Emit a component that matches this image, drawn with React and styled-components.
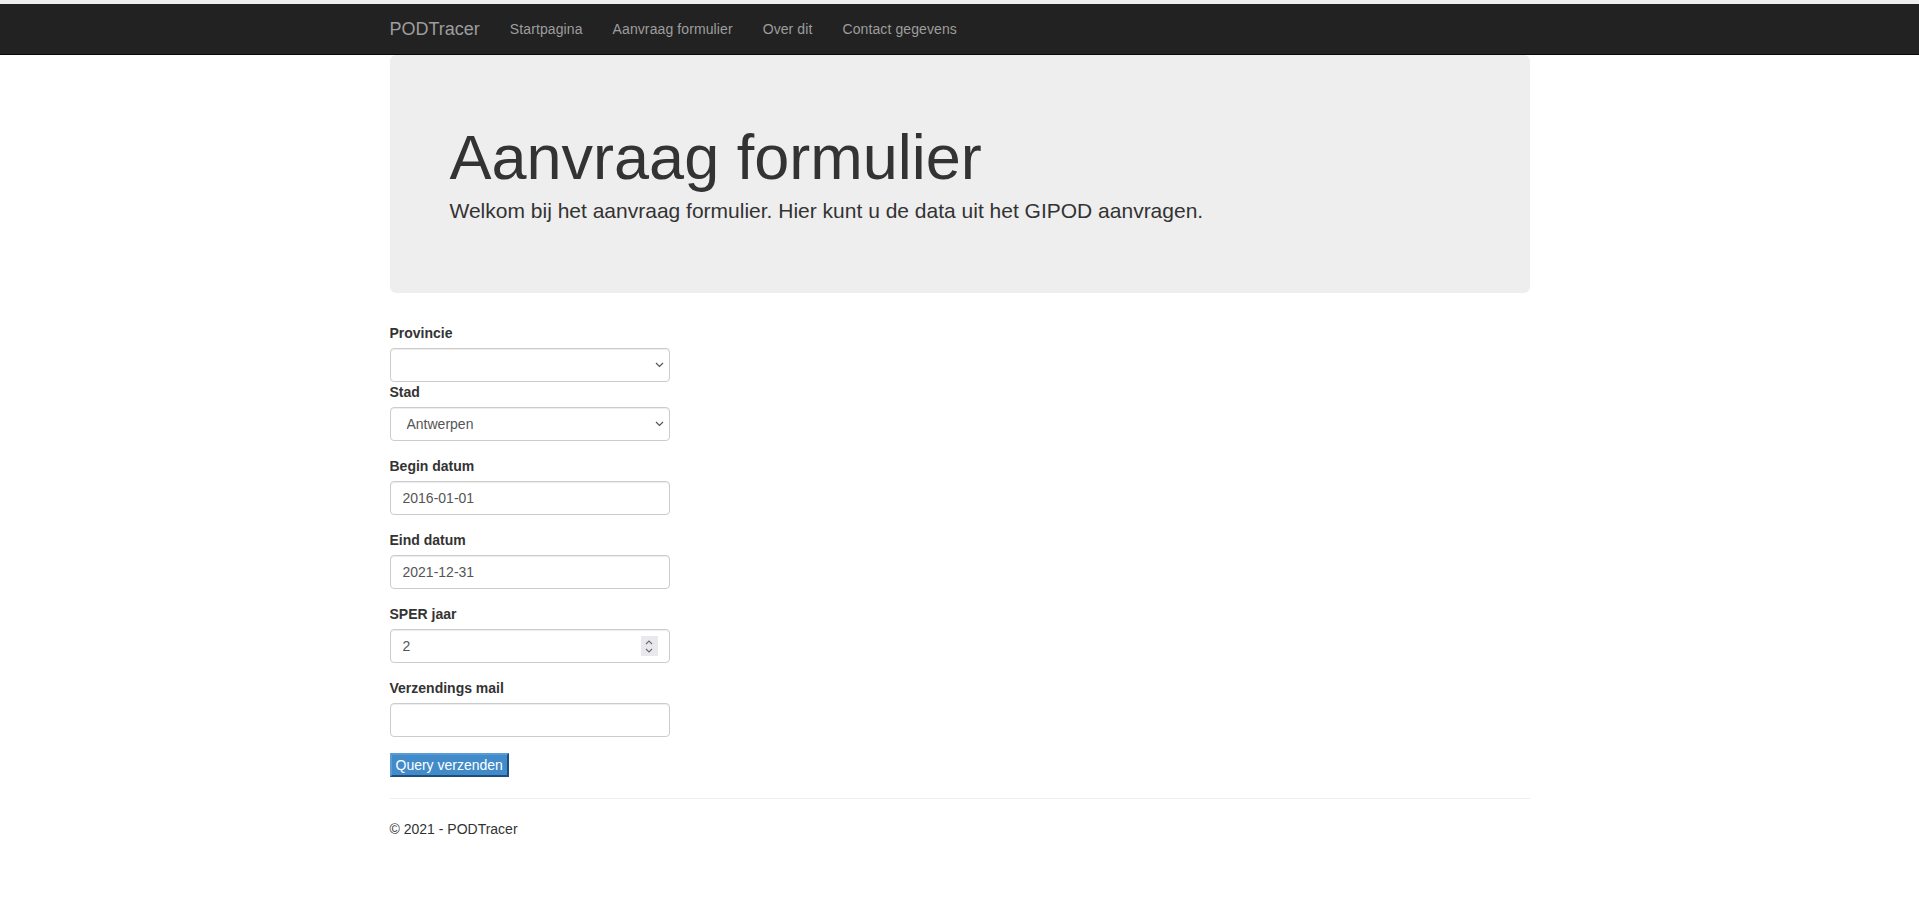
import React from "react";
import styled, { createGlobalStyle } from "styled-components";

const Global = createGlobalStyle`
  * { box-sizing: border-box; }
  html, body { margin: 0; padding: 0; background: #fff; }
  body {
    font-family: "Liberation Sans", Arial, Helvetica, sans-serif;
    font-size: 14px;
    line-height: 1.42857143;
    color: #333;
  }
`;

const TopStrip = styled.div`
  height: 4px;
  background: #eeeef1;
`;

const Navbar = styled.nav`
  background: #222;
  border-bottom: 1px solid #080808;
  min-height: 50px;
`;

const Container = styled.div`
  width: 1170px;
  margin: 0 auto;
  padding: 0 15px;
`;

const NavInner = styled(Container)`
  display: flex;
  align-items: center;
  height: 50px;
`;

const Brand = styled.a`
  display: block;
  margin-left: -15px;
  padding: 15px;
  font-size: 18px;
  line-height: 20px;
  color: #9d9d9d;
  text-decoration: none;
`;

const NavList = styled.ul`
  display: flex;
  list-style: none;
  margin: 0;
  padding: 0;
`;

const NavLink = styled.a`
  display: block;
  padding: 15px;
  line-height: 20px;
  letter-spacing: 0.1px;
  color: #9d9d9d;
  text-decoration: none;
`;

const Jumbotron = styled.div`
  background: #eee;
  border-radius: 6px;
  padding: 48px 60px;
  margin-bottom: 30px;
`;

const Title = styled.h1`
  margin: 20px 0 4px;
  font-size: 63px;
  font-weight: 500;
  line-height: 1.1;
  color: inherit;
`;

const Lead = styled.p`
  margin: 0 0 19px;
  font-size: 21px;
  font-weight: 200;
`;

const FormGroup = styled.div`
  margin-bottom: 15px;
`;

const Label = styled.label`
  display: inline-block;
  margin-bottom: 5px;
  font-weight: 700;
`;

const fieldCss = `
  display: block;
  width: 100%;
  height: 34px;
  padding: 6px 12px;
  font-family: inherit;
  font-size: 14px;
  line-height: 1.42857143;
  color: #555;
  background-color: #fff;
  border: 1px solid #ccc;
  border-radius: 4px;
  box-shadow: inset 0 1px 1px rgba(0,0,0,.075);
  outline: none;
`;

const FieldWrap = styled.div`
  position: relative;
  width: 280px;
`;

const Select = styled.select`
  ${fieldCss}
  appearance: none;
  -webkit-appearance: none;
  padding-left: 16px;
`;

const Chevron = styled.svg`
  position: absolute;
  right: 6px;
  top: 14px;
  width: 9px;
  height: 6px;
  pointer-events: none;
`;

const Input = styled.input`
  ${fieldCss}
  -moz-appearance: textfield;
  &::-webkit-inner-spin-button,
  &::-webkit-outer-spin-button {
    -webkit-appearance: none;
    margin: 0;
  }
`;

const Spinner = styled.span`
  position: absolute;
  right: 12px;
  top: 7px;
  width: 17px;
  height: 20px;
  background: #e9e9ed;
  display: flex;
  flex-direction: column;
  align-items: center;
  justify-content: center;
  gap: 3px;
  pointer-events: none;
`;

const Submit = styled.input`
  margin-top: 1px;
  font-family: inherit;
  font-size: 14px;
  line-height: 20px;
  color: #fff;
  background-color: #428bca;
  padding: 0 4px;
  border-width: 2px;
  border-style: solid;
  border-color: #5b9bd5 #1e4f7a #1e4f7a #5b9bd5;
  cursor: pointer;
`;

const Rule = styled.hr`
  margin: 21px 0 20px;
  border: 0;
  border-top: 1px solid #eee;
`;

const FooterText = styled.p`
  margin: 0 0 10px;
`;

const ChevronDown = () => (
  <Chevron viewBox="0 0 9 6">
    <path d="M1 1 L4.5 4.5 L8 1" fill="none" stroke="#555" strokeWidth="1.2" />
  </Chevron>
);

const SpinArrow = ({ up }) => (
  <svg width="8" height="5" viewBox="0 0 8 5">
    <path
      d={up ? "M1 4 L4 1 L7 4" : "M1 1 L4 4 L7 1"}
      fill="none"
      stroke="#6b6b6b"
      strokeWidth="1.1"
    />
  </svg>
);

export default function App() {
  return (
    <>
      <Global />
      <TopStrip />
      <Navbar>
        <NavInner>
          <Brand href="#">PODTracer</Brand>
          <NavList>
            <li><NavLink href="#">Startpagina</NavLink></li>
            <li><NavLink href="#">Aanvraag formulier</NavLink></li>
            <li><NavLink href="#">Over dit</NavLink></li>
            <li><NavLink href="#">Contact gegevens</NavLink></li>
          </NavList>
        </NavInner>
      </Navbar>
      <Container>
        <Jumbotron>
          <Title>Aanvraag formulier</Title>
          <Lead>Welkom bij het aanvraag formulier. Hier kunt u de data uit het GIPOD aanvragen.</Lead>
        </Jumbotron>
        <form onSubmit={(e) => e.preventDefault()}>
          <FormGroup>
            <Label htmlFor="prov">Provincie</Label>
            <FieldWrap>
              <Select id="prov" defaultValue="">
                <option value=""></option>
                <option>Antwerpen</option>
              </Select>
              <ChevronDown />
            </FieldWrap>
            <Label htmlFor="stad">Stad</Label>
            <FieldWrap>
              <Select id="stad" defaultValue="Antwerpen">
                <option>Antwerpen</option>
              </Select>
              <ChevronDown />
            </FieldWrap>
          </FormGroup>
          <FormGroup>
            <Label htmlFor="begin">Begin datum</Label>
            <FieldWrap>
              <Input id="begin" type="text" defaultValue="2016-01-01" />
            </FieldWrap>
          </FormGroup>
          <FormGroup>
            <Label htmlFor="eind">Eind datum</Label>
            <FieldWrap>
              <Input id="eind" type="text" defaultValue="2021-12-31" />
            </FieldWrap>
          </FormGroup>
          <FormGroup>
            <Label htmlFor="sper">SPER jaar</Label>
            <FieldWrap>
              <Input id="sper" type="number" defaultValue="2" />
              <Spinner>
                <SpinArrow up />
                <SpinArrow />
              </Spinner>
            </FieldWrap>
          </FormGroup>
          <FormGroup>
            <Label htmlFor="mail">Verzendings mail</Label>
            <FieldWrap>
              <Input id="mail" type="email" />
            </FieldWrap>
          </FormGroup>
          <Submit type="submit" value="Query verzenden" />
        </form>
        <Rule />
        <footer>
          <FooterText>© 2021 - PODTracer</FooterText>
        </footer>
      </Container>
    </>
  );
}
